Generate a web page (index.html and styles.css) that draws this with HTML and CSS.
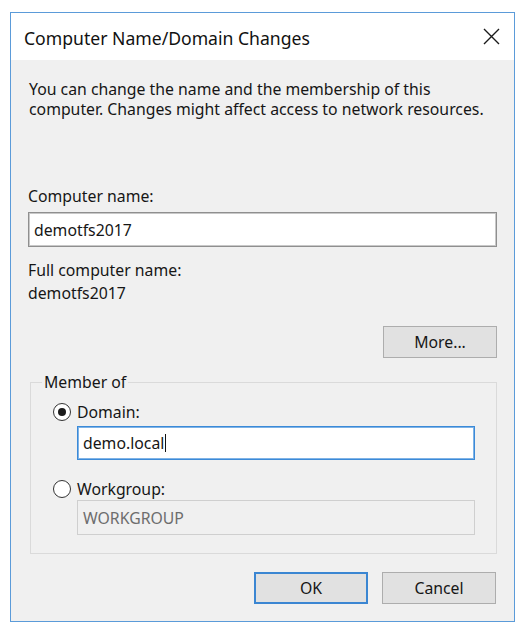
FILE: index.html
```html
<!DOCTYPE html>
<html>
<head>
<meta charset="utf-8">
<link rel="stylesheet" href="styles.css">
</head>
<body>
<div class="window">
  <div class="titlebar">
    <span class="title">Computer Name/Domain Changes</span>
    <svg class="close" width="17" height="17" viewBox="0 0 17 17"><path d="M1 1L16 16M16 1L1 16" stroke="#1a1a1a" stroke-width="1.4" fill="none"/></svg>
  </div>
  <div class="content">
    <p class="intro">You can change the name and the membership of this<br>computer. Changes might affect access to network resources.</p>
    <div class="label first">Computer name:</div>
    <div class="textbox">demotfs2017</div>
    <div class="label full">Full computer name:</div>
    <div class="label value">demotfs2017</div>
    <div class="more-row"><div class="btn">More...</div></div>
    <fieldset class="group">
      <legend>Member of</legend>
      <div class="radio-row domain"><span class="radio checked"></span><span>Domain:</span></div>
      <div class="textbox focus inset">demo.local<span class="caret"></span></div>
      <div class="radio-row workgroup"><span class="radio"></span><span>Workgroup:</span></div>
      <div class="textbox disabled inset">WORKGROUP</div>
    </fieldset>
    <div class="actions">
      <div class="btn default">OK</div>
      <div class="btn">Cancel</div>
    </div>
  </div>
</div>
</body>
</html>
```
FILE: styles.css
```css
html, body {
  margin: 0;
  background: #ffffff;
}
body {
  padding: 12px 0 0 10px;
  font-family: "Noto Sans", "Open Sans", sans-serif;
  font-size: 15.8px;
  line-height: 20px;
  color: #161616;
}
.window {
  width: 503px;
  height: 608px;
  border: 1px solid #5b9bd9;
  background: #f0f0f0;
  display: flex;
  flex-direction: column;
}
.titlebar {
  height: 47px;
  background: #ffffff;
  display: flex;
  align-items: center;
  justify-content: space-between;
  padding: 0 14px 0 13px;
}
.title {
  font-size: 17.6px;
  color: #111;
  margin-top: 2px;
}
.content {
  padding: 0 17px 0 17px;
  display: flex;
  flex-direction: column;
}
.intro {
  margin: 19px 0 0 1px;
}
.label.first {
  margin-top: 67px;
}
.textbox {
  height: 33px;
  margin-top: 6px;
  border: 1px solid #8f8f8f;
  box-shadow: inset 0 0 0 1px #c8c8c8;
  background: #fff;
  padding: 0 5px;
  display: flex;
  align-items: center;
}
.label.full {
  margin-top: 13px;
}
.label.value {
  margin-top: 3px;
}
.more-row {
  display: flex;
  justify-content: flex-end;
  margin-top: 23px;
}
.btn {
  width: 112px;
  height: 30px;
  border: 1px solid #adadad;
  background: #e1e1e1;
  display: flex;
  align-items: center;
  justify-content: center;
}
.group {
  margin: 14px 0 0 2px;
  border: 1px solid #dadada;
  padding: 0 21px 18px 11px;
}
.group legend {
  padding: 0 2px;
  line-height: 20px;
}
.radio-row {
  display: flex;
  align-items: center;
  gap: 6px;
  margin-left: 11px;
  height: 20px;
}
.radio-row.domain {
  margin-top: 10px;
}
.radio-row.workgroup {
  margin-top: 19px;
}
.radio {
  width: 16px;
  height: 16px;
  border: 1px solid #333;
  border-radius: 50%;
  background: #fff;
  display: flex;
  align-items: center;
  justify-content: center;
}
.radio.checked::after {
  content: "";
  width: 8px;
  height: 8px;
  border-radius: 50%;
  background: #1a1a1a;
}
.textbox.inset {
  margin-left: 35px;
}
.textbox.focus {
  margin-top: 4px;
  height: 32px;
  border: 1px solid #3b8ad8;
  box-shadow: inset 0 0 0 1px #7fb3e6;
}
.caret {
  display: inline-block;
  width: 1px;
  height: 18px;
  background: #111;
  margin-left: 1px;
}
.textbox.disabled {
  margin-top: 1px;
  border: 1px solid #cfcfcf;
  box-shadow: none;
  background: #f0f0f0;
  color: #6d6d6d;
}
.actions {
  display: flex;
  justify-content: flex-end;
  gap: 14px;
  margin-top: 18px;
  padding-right: 1px;
}
.btn.default {
  border: 2px solid #3b86d2;
  width: 110px;
  height: 28px;
}
```
